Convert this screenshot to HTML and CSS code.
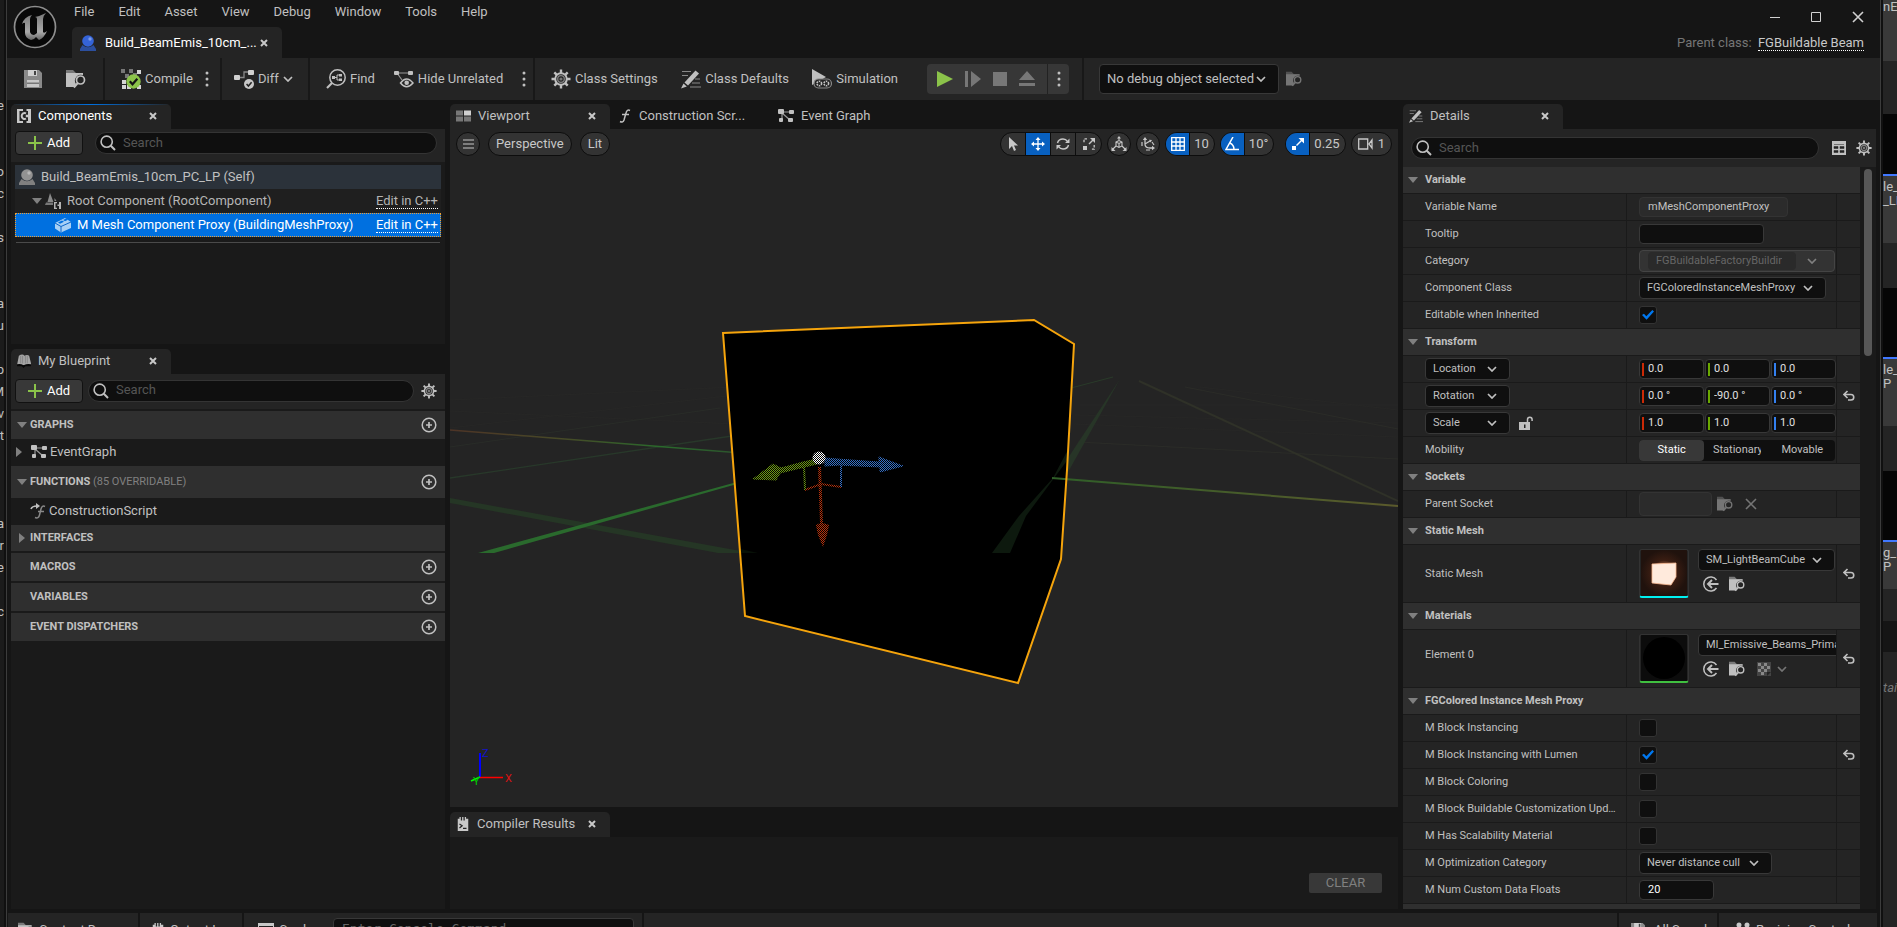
FILE: index.html
```html
<!DOCTYPE html>
<html lang="en">
<head>
<meta charset="utf-8">
<meta name="viewport" content="width=device-width, initial-scale=1">
<title>Build_BeamEmis_10cm_PC_LP</title>
<link rel="stylesheet" href="styles.css">
</head>
<body>
<svg class="sprite" aria-hidden="true">
  <symbol id="i-x" viewBox="0 0 8 8"><path d="M1 1l6 6M7 1L1 7" stroke="currentColor" stroke-width="2" fill="none"/></symbol>
  <symbol id="i-close" viewBox="0 0 12 12"><path d="M1 1l10 10M11 1L1 11" stroke="currentColor" stroke-width="1.6" fill="none"/></symbol>
  <symbol id="i-chev" viewBox="0 0 10 6"><path d="M1 1l4 4 4-4" stroke="currentColor" stroke-width="1.7" fill="none"/></symbol>
  <symbol id="i-dots" viewBox="0 0 4 16"><circle cx="2" cy="2" r="1.5" fill="currentColor"/><circle cx="2" cy="8" r="1.5" fill="currentColor"/><circle cx="2" cy="14" r="1.5" fill="currentColor"/></symbol>
  <symbol id="i-search" viewBox="0 0 16 16"><circle cx="6.7" cy="6.7" r="5.6" stroke="currentColor" stroke-width="1.6" fill="none"/><path d="M10.8 10.8l4.2 4.2" stroke="currentColor" stroke-width="2"/></symbol>
  <symbol id="i-plus" viewBox="0 0 14 14"><path d="M7 0v14M0 7h14" stroke="#8bc34a" stroke-width="2"/></symbol>
  <symbol id="i-addc" viewBox="0 0 16 16"><circle cx="8" cy="8" r="6.8" stroke="currentColor" stroke-width="1.5" fill="none"/><path d="M8 5v6M5 8h6" stroke="currentColor" stroke-width="1.7"/></symbol>
  <symbol id="i-down" viewBox="0 0 10 6"><path d="M0 0h10L5 6z" fill="currentColor"/></symbol>
  <symbol id="i-right" viewBox="0 0 6 10"><path d="M0 0v10l6-5z" fill="currentColor"/></symbol>
  <symbol id="i-gear" viewBox="0 0 20 20"><g stroke="currentColor" fill="none"><path d="M10 .5v19M.5 10h19M3.3 3.3l13.4 13.4M16.7 3.3L3.3 16.700" stroke-width="2.400"/><circle cx="10" cy="10" r="5.800" fill="#242424" stroke-width="2"/><circle cx="10" cy="10" r="3.300" stroke-width="1.300" opacity=".6"/><circle cx="10" cy="10" r="1.600" fill="#777" stroke="none"/></g></symbol>
  <symbol id="i-save" viewBox="0 0 18 18"><path d="M0 0h15l3 3v15H0z" fill="#8a8a8a"/><path d="M4 0h9v6H4z" fill="#d0d0d0"/><path d="M10 1h2v4h-2z" fill="#444"/><path d="M3 10h12v7H3z" fill="#c8c8c8"/><path d="M3 12.500h12v1.500H3z" fill="#777"/></symbol>
  <symbol id="i-browse" viewBox="0 0 20 18"><path d="M0 3V0h7l3 3h7v2H0z" fill="currentColor" opacity=".55"/><path d="M0 3h17v2a6 6 0 0 0-7 9l-1 3H0z" fill="currentColor"/><circle cx="14.500" cy="10" r="4" stroke="currentColor" stroke-width="1.700" fill="#242424"/><path d="M11.800 13l-4 4.500" stroke="currentColor" stroke-width="2"/></symbol>
  <symbol id="i-compile" viewBox="0 0 20 20"><g fill="#777"><path d="M0 0h4v4H0zM8 0h4v4H8zM4 5h4v4H4zM12 4h4v4h-4z"/></g><g fill="#d5d5d5"><path d="M16 1h4v4h-4zM1 11h4v4H1zM1 16h4v4H1zM6 16h4v4H6zM16 16h4v4h-4z"/></g><circle cx="12.500" cy="12.500" r="7.200" fill="#8bc34a"/><path d="M8.800 12.300l2.700 3 4.800-5.500" stroke="#151515" stroke-width="2.200" fill="none"/></symbol>
  <symbol id="i-diff" viewBox="0 0 20 20"><path d="M5 8.500h5V3h5" stroke="#888" stroke-width="1.300" fill="none"/><rect y="6" width="6" height="5" rx="1" fill="#d0d0d0"/><rect x="14" y="1" width="6" height="5" rx="1" fill="#d0d0d0"/><circle cx="15" cy="15" r="5" fill="#c8c8c8"/><path d="M12.600 15l1.800 2 3.200-3.800" stroke="#222" stroke-width="1.500" fill="none"/></symbol>
  <symbol id="i-find" viewBox="0 0 20 20"><circle cx="11.500" cy="8.500" r="7.700" stroke="currentColor" stroke-width="1.500" fill="none"/><path d="M6 14l-5 5" stroke="currentColor" stroke-width="2.200"/><path d="M8 8.500h3M11 6v5M11 6h3M11 11h3" stroke="currentColor" fill="none"/><path d="M6 7h3v3H6zM13 5h3v2.500h-3zM13 9.500h3V12h-3z" fill="currentColor"/></symbol>
  <symbol id="i-hide" viewBox="0 0 20 18"><path d="M3 3h14M3 3l5 7" stroke="#999" stroke-width="1.200"/><rect y="1" width="5" height="4" rx="1" fill="currentColor"/><rect x="14" y="1" width="5" height="4" rx="1" fill="currentColor"/><path d="M6.500 13q6-8 12.500 0q-6.500 7.500-12.500 0z" stroke="currentColor" stroke-width="1.500" fill="#242424"/><circle cx="12.700" cy="12.700" r="2.300" fill="currentColor"/></symbol>
  <symbol id="i-pencil" viewBox="0 0 20 20"><path d="M1 2.500h9M1 6.500h6M11 14h8M9 18h11M14 10h5" stroke="#888" stroke-width="1.200"/><path d="M14.500 1.500l3.500 3-11 12-3.500-3z" fill="currentColor"/><path d="M2.500 14.500l3.300 3L0 19.500z" fill="currentColor"/></symbol>
  <symbol id="i-sim" viewBox="0 0 20 20"><path d="M0 0l14 8L0 16z" fill="currentColor"/><rect x="2" y="10" width="17.500" height="9" rx="4.500" fill="#242424" stroke="#888" stroke-width="1.200"/><circle cx="7.300" cy="14.500" r="2.300" stroke="currentColor" stroke-width="1.600" stroke-dasharray="1.500 .8" fill="none"/><circle cx="14.300" cy="14.500" r="2.300" stroke="currentColor" stroke-width="1.600" stroke-dasharray="1.500 .8" fill="none"/></symbol>
  <symbol id="i-blue" viewBox="0 0 16 16"><circle cx="8" cy="6" r="5.800" fill="var(--ball)"/><circle cx="10" cy="4" r="1.700" fill="#fff" opacity=".35"/><path d="M0 14l2.500-4q5.500 4.500 11 0L16 14v2H0z" fill="var(--base)"/></symbol>
  <symbol id="i-comp" viewBox="0 0 14 14"><path d="M0 0h6v2H2.500v10H6v2H0zM9.500 0H14v14H9.500v-2h1.500V8.200H8.800V5.800H11V2H9.500z" fill="#c8c8c8"/><path d="M9 4.300A3 3 0 1 0 9 9.700" stroke="#c8c8c8" stroke-width="2" fill="none"/></symbol>
  <symbol id="i-root" viewBox="0 0 16 16"><path d="M5 0l3.500 9h-6zM9.500 5l2 3h-2z" fill="#8a8a8a"/><path d="M1 9.500h7V12H0z" fill="#777"/><path d="M9 9h3v1.300h-1.500v4.400H12V16H9zM14 9h2v7h-2v-3h-1.500v-1.500H14z" fill="#b5b5b5"/></symbol>
  <symbol id="i-brick" viewBox="0 0 16 16"><path d="M0 6l10-5 6 4v6L6 15.500l-6-4z" fill="#a8d0f5"/><path d="M0 6l6 3.500L16 5M6 9.500V15" stroke="#0b65c8" fill="none"/><path d="M3 5.500l4-2 2 1.300-4 2zM8 3l3-1.500 2 1.300-3 1.500z" fill="#0070e0"/></symbol>
  <symbol id="i-graph" viewBox="0 0 16 14"><path d="M4 3h9M4 4l8 7M4 4v7" stroke="#999" stroke-width="1.200"/><rect width="6" height="5" rx="1" fill="currentColor"/><rect x="11" y="1" width="5" height="4" rx="1" fill="currentColor"/><rect x="1" y="9" width="4" height="4" rx="1" fill="currentColor"/><rect x="10" y="9" width="5" height="4" rx="1" fill="currentColor"/></symbol>
  <symbol id="i-func" viewBox="0 0 12 14"><path d="M11 1.500Q8 0 7 4L5 11Q4 14 1 12.500M3 5.500h7" stroke="currentColor" stroke-width="1.500" fill="none"/></symbol>
  <symbol id="i-func2" viewBox="0 0 16 16"><path d="M1 6Q2 3 7 3" stroke="currentColor" stroke-width="1.600" fill="none"/><path d="M6 0l4 3-4 3z" fill="currentColor"/><path d="M15 3.500Q12 2 11 6l-1.500 6Q8.500 16 5 14.500M8 8.500h6" stroke="#888" stroke-width="1.500" fill="none"/></symbol>
  <symbol id="i-book" viewBox="0 0 15 15"><path d="M2 2q4-3 6 0 3-2 5 0l2 8v2H0z" fill="#a5a5a5"/><path d="M4 2v8M6 2v8M9 2v8M11 2v8" stroke="#777" stroke-width=".7"/><path d="M0 11q4-1 7 1 4-2 8-1v2H9l-2 2-2-2H0z" fill="#080808"/></symbol>
  <symbol id="i-view" viewBox="0 0 15 11"><path d="M0 0h7v5H0zM0 6h7v5H0zM8 6h7v5H8z" fill="#777"/><path d="M8 0h7v5H8z" fill="#d0d0d0"/></symbol>
  <symbol id="i-log" viewBox="0 0 12 16"><path d="M0 2h2V0h1.500v4H5V0h1.500v4H8V0h1.500v2H12v14H0z" fill="#c8c8c8"/><path d="M2 8l3 2-3 2.500M6 13h4" stroke="#222" stroke-width="1.400" fill="none"/></symbol>
  <symbol id="i-table" viewBox="0 0 14 14"><path d="M0 0h14v14H0z" fill="currentColor"/><path d="M2 3.500h10M2 5.500h4v2H2zM8 5.500h4v2H8zM2 9.500h4v2H2zM8 9.500h4v2H8z" fill="#242424" stroke="#242424" stroke-width=".5"/></symbol>
  <symbol id="i-reset" viewBox="0 0 12 10"><path d="M4.500 0L1 3.500 4.500 7M1 3.500h7a2.700 2.700 0 0 1 0 5.500H5" stroke="currentColor" stroke-width="1.600" fill="none"/></symbol>
  <symbol id="i-use" viewBox="0 0 16 16"><path d="M13.500 4A7 7 0 1 0 13.500 12" stroke="currentColor" stroke-width="1.500" fill="none"/><path d="M15.500 8H5M9 4L5 8l4 4" stroke="currentColor" stroke-width="1.900" fill="none"/></symbol>
  <symbol id="i-lock" viewBox="0 0 14 14"><path d="M0 6h11v8H0z" fill="currentColor"/><path d="M8.500 6V3.500a2.300 2.300 0 0 1 4.600 0V5" stroke="currentColor" stroke-width="1.500" fill="none"/><path d="M5 8.500h1.500V12H5z" fill="#242424"/></symbol>
  <symbol id="i-check" viewBox="0 0 14 14"><path d="M0 0h14v14H0z" fill="#444"/><path d="M1 1h3v3H1zM7 1h3v3H7zM4 4h3v3H4zM10 4h3v3h-3zM1 7h3v3H1zM7 7h3v3H7zM4 10h3v3H4z" fill="#888"/><path d="M10 14v-4h4z" fill="#242424"/></symbol>
  <symbol id="i-cursor" viewBox="0 0 10 14"><path d="M1 0v12l3-3 2 5 2-1-2-4.500h4z" fill="currentColor"/></symbol>
  <symbol id="i-move" viewBox="0 0 14 14"><path d="M7 2v10M2 7h10" stroke="currentColor" stroke-width="1.300"/><path d="M7 0l2.500 3h-5zM7 14l2.500-3h-5zM0 7l3-2.500v5zM14 7l-3-2.500v5z" fill="currentColor"/></symbol>
  <symbol id="i-rotate" viewBox="0 0 14 14"><path d="M1.500 6Q2.500 2 7 2q3 0 4.500 2.500M12.500 8Q11.500 12 7 12q-3 0-4.500-2.500" stroke="currentColor" stroke-width="1.400" fill="none"/><path d="M13.500 1.500V6H9zM.5 12.500V8H5z" fill="currentColor"/></symbol>
  <symbol id="i-scale" viewBox="0 0 12 12"><path d="M6 6l4-4" stroke="currentColor" stroke-width="1.500"/><path d="M7 0h5v5zM0 8h4v4H0z" fill="currentColor"/><path d="M4 .8H1V5M11.200 7v4.200H7.500" stroke="currentColor" stroke-width="1.300" stroke-dasharray="2.500 1.500" fill="none"/></symbol>
  <symbol id="i-world" viewBox="0 0 16 16"><path d="M5 6l3-1.500L11 6v4l-3 1.500L5 10zM5 6l3 1.500L11 6M8 7.500v4M8 4.500V1M5 10l-4 4M11 10l4 4" stroke="currentColor" stroke-width="1.100" fill="none"/><path d="M6 2.500L8 0l2 2.500zM.5 15v-4l4 4zM15.500 15v-4l-4 4z" fill="currentColor"/></symbol>
  <symbol id="i-snap" viewBox="0 0 14 14"><path d="M4 2v5q0 4 5 4h3M4 7l5-3" stroke="currentColor" stroke-width="1.300" fill="none"/><path d="M4 0l2.200 3H1.800zM14 11l-3-2.200v4.400zM11 3L8 2.800l1.500 2.600z" fill="currentColor"/><path d="M1 5v4M5 13h4M11 5l2 3" stroke="currentColor" stroke-width="1.200"/></symbol>
  <symbol id="i-grid" viewBox="0 0 14 14"><path d="M.7.7h12.600v12.600H.7zM5 0v14M9 0v14M0 5h14M0 9h14" stroke="currentColor" stroke-width="1.300" fill="none"/></symbol>
  <symbol id="i-angle" viewBox="0 0 14 14"><path d="M8 0L1 12.500h13M5 6q4 2 4 6.500" stroke="currentColor" stroke-width="1.500" fill="none"/></symbol>
  <symbol id="i-snapsc" viewBox="0 0 12 12"><path d="M4.500 7.500L10 2" stroke="currentColor" stroke-width="1.500"/><path d="M6.500 0H12v5.500zM0 8h4v4H0z" fill="currentColor"/></symbol>
  <symbol id="i-cam" viewBox="0 0 15 12"><path d="M.7 1h9v10h-9zM14 2l-3 4 3 4z" stroke="currentColor" stroke-width="1.300" fill="none"/></symbol>
</svg>

<div class="desktop">
  <aside class="behind-left" aria-hidden="true">
    <span>e</span><span></span><span></span><span>o</span><span>c</span><span></span><span>s</span><span></span><span></span><span>a</span><span>u</span><span></span><span>p</span><span>M</span><span>v</span><span>t</span><span></span><span></span><span></span><span>a</span><span>r</span><span>e</span><span></span><span>c</span>
  </aside>

  <div class="window">
    <header class="titlebar">
      <svg class="logo" viewBox="0 0 44 44" role="img" aria-label="Unreal Engine">
        <defs><linearGradient id="metal" x1="0" y1="0" x2="0" y2="1"><stop offset="0" stop-color="#777"/><stop offset=".7" stop-color="#aaa"/><stop offset="1" stop-color="#666"/></linearGradient></defs>
        <circle cx="22" cy="22" r="20.500" fill="#080808" stroke="#8e8e8e" stroke-width="1.700"/>
        <path d="M9 19Q11 12 19 10Q17 12 17 14V27Q18 30 21 30Q23 29 24 28V14Q24 12 22 12Q27 11 33 8Q30 11 30 14V27Q31 29 34 26Q31 33 26 35L23 32Q21 35 18 35Q12 33 12 28V18Q11 17 9 19z" fill="url(#metal)"/>
      </svg>
      <div class="title-main">
        <nav class="menu"><button>File</button><button>Edit</button><button>Asset</button><button>View</button><button>Debug</button><button>Window</button><button>Tools</button><button>Help</button></nav>
        <div class="doc-tab"><svg class="s16 ball-blue"><use href="#i-blue"/></svg><span>Build_BeamEmis_10cm_...</span><button class="tab-x" aria-label="Close"><svg class="s8"><use href="#i-x"/></svg></button></div>
      </div>
      <div class="title-end">
        <div class="win-buttons">
          <button aria-label="Minimize"><svg viewBox="0 0 10 10" class="s10"><path d="M0 5.500h10" stroke="#d0d0d0"/></svg></button>
          <button aria-label="Maximize"><svg viewBox="0 0 10 10" class="s10"><path d="M.5.5h9v9h-9z" stroke="#d0d0d0" fill="none"/></svg></button>
          <button aria-label="Close window"><svg class="s12"><use href="#i-close"/></svg></button>
        </div>
        <div class="parent-class">Parent class: <a class="dotted" href="#parent">FGBuildable Beam</a></div>
      </div>
    </header>

    <div class="toolbar">
      <div class="tgroup g-file"><button aria-label="Save"><svg class="s18"><use href="#i-save"/></svg></button><button aria-label="Browse"><svg class="s20"><use href="#i-browse"/></svg></button></div>
      <div class="tgroup g-compile"><button><svg class="s20"><use href="#i-compile"/></svg>Compile</button><button aria-label="Compile options"><svg class="dots"><use href="#i-dots"/></svg></button></div>
      <div class="tgroup g-diff"><button><svg class="s20"><use href="#i-diff"/></svg>Diff<svg class="chev"><use href="#i-chev"/></svg></button></div>
      <div class="tgroup g-find"><button><svg class="s20"><use href="#i-find"/></svg>Find</button><button><svg class="s20"><use href="#i-hide"/></svg>Hide Unrelated</button><button aria-label="Hide options"><svg class="dots"><use href="#i-dots"/></svg></button></div>
      <div class="tgroup g-class"><button><svg class="s20"><use href="#i-gear"/></svg>Class Settings</button><button><svg class="s20"><use href="#i-pencil"/></svg>Class Defaults</button><button><svg class="s20"><use href="#i-sim"/></svg>Simulation</button></div>
      <div class="tgroup g-play">
        <div class="play">
          <button aria-label="Play"><svg class="s16" viewBox="0 0 16 16"><path d="M0 0l16 8L0 16z" fill="#8bc34a"/></svg></button>
          <button aria-label="Step"><svg class="s16" viewBox="0 0 16 16"><path d="M0 0h3v16H0zM6 0l10 8L6 16z" fill="#777"/></svg></button>
          <button aria-label="Stop"><svg class="s14" viewBox="0 0 14 14"><path d="M0 0h14v14H0z" fill="#777"/></svg></button>
          <button aria-label="Eject"><svg class="s16" viewBox="0 0 16 16"><path d="M8 0l8 9H0zM0 12h16v3H0z" fill="#777"/></svg></button>
          <button class="more" aria-label="Play options"><svg class="dots"><use href="#i-dots"/></svg></button>
        </div>
      </div>
      <div class="tgroup g-debug"><span class="select debug"><select aria-label="Debug object"><option>No debug object selected</option></select><svg class="chev"><use href="#i-chev"/></svg></span><button class="dim" aria-label="Browse to object"><svg class="s16"><use href="#i-browse"/></svg></button></div>
    </div>

    <main class="workspace">
      <div class="col-left">
        <section class="panel components">
          <div class="tabs"><div class="tab active focused"><svg class="s14"><use href="#i-comp"/></svg><span>Components</span><button class="tab-x" aria-label="Close"><svg class="s8"><use href="#i-x"/></svg></button></div></div>
          <div class="bar wide"><button class="add"><svg class="s14"><use href="#i-plus"/></svg>Add</button><label class="search"><svg class="s16"><use href="#i-search"/></svg><input type="text" placeholder="Search" aria-label="Search components"></label></div>
          <div class="tree">
            <div class="node self"><svg class="s16 ball-grey"><use href="#i-blue"/></svg><span>Build_BeamEmis_10cm_PC_LP (Self)</span></div>
            <div class="node root"><svg class="tri"><use href="#i-down"/></svg><svg class="s16"><use href="#i-root"/></svg><span>Root Component (RootComponent)</span><a class="dotted" href="#root">Edit in C++</a></div>
            <div class="node proxy"><svg class="s16"><use href="#i-brick"/></svg><span>M Mesh Component Proxy (BuildingMeshProxy)</span><a class="dotted" href="#proxy">Edit in C++</a></div>
            <hr>
          </div>
        </section>
        <section class="panel blueprint">
          <div class="tabs"><div class="tab active"><svg class="s14"><use href="#i-book"/></svg><span>My Blueprint</span><button class="tab-x" aria-label="Close"><svg class="s8"><use href="#i-x"/></svg></button></div></div>
          <div class="bar"><button class="add"><svg class="s14"><use href="#i-plus"/></svg>Add</button><label class="search"><svg class="s16"><use href="#i-search"/></svg><input type="text" placeholder="Search" aria-label="Search blueprint"></label><button class="icon" aria-label="Blueprint settings"><svg class="s16"><use href="#i-gear"/></svg></button></div>
          <div class="outline">
            <div class="group"><svg class="tri"><use href="#i-down"/></svg><h3>GRAPHS</h3><button aria-label="Add graph"><svg class="s16"><use href="#i-addc"/></svg></button></div>
            <div class="item"><svg class="tri-r"><use href="#i-right"/></svg><svg class="s16"><use href="#i-graph"/></svg><span>EventGraph</span></div>
            <div class="group tall"><svg class="tri"><use href="#i-down"/></svg><h3>FUNCTIONS <small>(85 OVERRIDABLE)</small></h3><button aria-label="Add function"><svg class="s16"><use href="#i-addc"/></svg></button></div>
            <div class="item leaf"><svg class="s16"><use href="#i-func2"/></svg><span>ConstructionScript</span></div>
            <div class="group short"><svg class="tri-r"><use href="#i-right"/></svg><h3>INTERFACES</h3></div>
            <div class="group gap"><h3>MACROS</h3><button aria-label="Add macro"><svg class="s16"><use href="#i-addc"/></svg></button></div>
            <div class="group gap"><h3>VARIABLES</h3><button aria-label="Add variable"><svg class="s16"><use href="#i-addc"/></svg></button></div>
            <div class="group gap"><h3>EVENT DISPATCHERS</h3><button aria-label="Add dispatcher"><svg class="s16"><use href="#i-addc"/></svg></button></div>
          </div>
        </section>
      </div>

      <div class="col-mid">
        <section class="panel view-panel">
          <div class="tabs">
            <div class="tab active"><svg class="v15"><use href="#i-view"/></svg><span>Viewport</span><button class="tab-x" aria-label="Close"><svg class="s8"><use href="#i-x"/></svg></button></div>
            <div class="tab"><svg class="s14"><use href="#i-func"/></svg><span>Construction Scr...</span></div>
            <div class="tab"><svg class="s16"><use href="#i-graph"/></svg><span>Event Graph</span></div>
          </div>
          <div class="viewport">
            <svg class="scene" viewBox="450 129 948 678" preserveAspectRatio="xMidYMid slice" role="img" aria-label="Beam mesh preview">
              <defs>
                <linearGradient id="lineA" gradientUnits="userSpaceOnUse" x1="450" y1="0" x2="732" y2="0"><stop offset="0" stop-color="#4e3426"/><stop offset=".4" stop-color="#474a27"/><stop offset=".75" stop-color="#2a6a2c"/><stop offset="1" stop-color="#2c552c"/></linearGradient>
                <linearGradient id="lineB" gradientUnits="userSpaceOnUse" x1="1052" y1="0" x2="1398" y2="0"><stop offset="0" stop-color="#2f5f28"/><stop offset="1" stop-color="#5b5a2c"/></linearGradient>
                <pattern id="dither" width="2" height="2" patternUnits="userSpaceOnUse"><path d="M0 0h1v1H0zM1 1h1v1H1z" fill="#000"/></pattern>
                <clipPath id="cube"><path d="M723 333L1034 320L1074 344L1061 559L1018 683L745 616z"/></clipPath>
              </defs>
              <path d="M450 129h948v678H450z" fill="#242424"/>
              <g fill="none">
                <path d="M450 411L735 424M450 428L735 395M450 400L735 387M1074 424L1398 437M1075 415L1398 423M1080 405L1398 405M1200 387L1398 410" stroke="#272726"/>
                <path d="M450 447L720 408" stroke="#292c28"/>
                <path d="M450 478L732 436" stroke="#28382a" stroke-width="1.300"/>
                <path d="M1071 388L1113 377" stroke="#293a29"/>
                <path d="M1078 442L1398 459M1185 387L1398 429" stroke="#2b2c28"/>
                <path d="M1139 381L1398 501" stroke="#2f3128" stroke-width="2"/>
                <path d="M450 430L735 452.500" stroke="url(#lineA)" stroke-width="1.500"/>
              </g>
              <path d="M450 498L735 550L758 553H718L450 503z" fill="#253625"/>
              <path d="M478 553L737 482v2L494 553z" fill="#2a6a2d"/>
              <path d="M1120 379L1067 474L1060 480L1068 458z" fill="#273527"/>
              <path d="M723 333L1034 320L1074 344L1067 470L1061 559L1018 683L745 616z" fill="#000"/>
              <g clip-path="url(#cube)"><path d="M1074 444L1066 462L1026 516L1010 553H992L1019 516L1053 478L1074 438z" fill="#0d190e"/><path d="M723 545L758 553h-35z" fill="#071007"/></g>
              <path d="M1052 478L1398 506" stroke="url(#lineB)" stroke-width="2"/>
              <path d="M723 333L1034 320L1074 344L1067 470L1061 559L1018 683L745 616z" fill="none" stroke="#f5a40c" stroke-width="2"/>
              <g>
                <path d="M825 458l12 1 42 3v-5l24 9-23 6v-5l-41-2-14 1zM841 464v23" fill="#3470c8" stroke="#3470c8" stroke-width="1"/>
                <path d="M817 459l-14 3-22 6-8-4-20 15 23 1 4-7 37-9zM804 466l1 24" fill="#6d9a14" stroke="#6d9a14" stroke-width="1"/>
                <path d="M818 467h3l2 56 6 2-2 10-4 12-5-12-2-10 4-2z" fill="#b8320c"/>
                <path d="M805 490l16-6 20 3" fill="none" stroke="#b8320c" stroke-width="2"/>
                <path d="M804 466l1 24" stroke="#6d9a14" stroke-width="2"/><path d="M841 463v24" stroke="#3470c8" stroke-width="2"/>
                <circle cx="819" cy="458" r="6.500" fill="#fff"/>
                <path d="M748 448h160v102H748z" fill="url(#dither)" shape-rendering="crispEdges"/>
              </g>
              <path d="M480 753v24" stroke="#00f" stroke-width="2"/><path d="M480 777.500h23" stroke="#f00" stroke-width="1.500"/><path d="M480 777l-9 4" stroke="#0f0" stroke-width="1.500"/>
              <text x="482" y="757" fill="#1414c8">Z</text><text x="505" y="782" fill="#d61414">X</text><text x="473" y="785" fill="#0c0">Y</text>
            </svg>
            <div class="view-tools">
              <button class="pill round lead" aria-label="Viewport options"><svg viewBox="0 0 11 10" class="burger"><path d="M0 1h11M0 5h11M0 9h11" stroke="currentColor" stroke-width="1.200"/></svg></button>
              <button class="pill lead">Perspective</button><button class="pill">Lit</button>
              <span class="spacer"></span>
              <span class="pill seg trs"><button aria-label="Select"><svg class="s14"><use href="#i-cursor"/></svg></button><button class="on" aria-label="Move"><svg class="s14"><use href="#i-move"/></svg></button><button aria-label="Rotate"><svg class="s14"><use href="#i-rotate"/></svg></button><button aria-label="Scale"><svg class="s12"><use href="#i-scale"/></svg></button></span>
              <button class="pill round" aria-label="World space"><svg class="s16"><use href="#i-world"/></svg></button>
              <button class="pill round" aria-label="Surface snapping"><svg class="s14"><use href="#i-snap"/></svg></button>
              <span class="pill seg"><button class="on" aria-label="Grid snap"><svg class="s14"><use href="#i-grid"/></svg></button><button class="num">10</button></span>
              <span class="pill seg"><button class="on" aria-label="Angle snap"><svg class="s14"><use href="#i-angle"/></svg></button><button class="num">10°</button></span>
              <span class="pill seg set-off"><button class="on" aria-label="Scale snap"><svg class="s12"><use href="#i-snapsc"/></svg></button><button class="num">0.25</button></span>
              <button class="pill cam"><svg class="v15"><use href="#i-cam"/></svg>1</button>
            </div>
          </div>
        </section>
        <section class="panel results">
          <div class="tabs"><div class="tab active"><svg class="s14"><use href="#i-log"/></svg><span>Compiler Results</span><button class="tab-x" aria-label="Close"><svg class="s8"><use href="#i-x"/></svg></button></div></div>
          <div class="results-body"><button class="clear">CLEAR</button></div>
        </section>
      </div>

      <section class="panel col-right">
        <div class="tabs"><div class="tab active"><svg class="s14"><use href="#i-pencil"/></svg><span>Details</span><button class="tab-x" aria-label="Close"><svg class="s8"><use href="#i-x"/></svg></button></div></div>
        <div class="bar details-bar"><label class="search"><svg class="s16"><use href="#i-search"/></svg><input type="text" placeholder="Search" aria-label="Search details"></label><button class="icon" aria-label="Property matrix"><svg class="s14"><use href="#i-table"/></svg></button><button class="icon" aria-label="Details settings"><svg class="s16"><use href="#i-gear"/></svg></button></div>
        <div class="details">
          <div class="props">
            <h4><svg class="tri"><use href="#i-down"/></svg>Variable</h4>
            <div class="row"><label for="vname">Variable Name</label><div><input id="vname" class="field readonly w-148" type="text" value="mMeshComponentProxy" readonly></div><div></div></div>
            <div class="row"><label for="tip">Tooltip</label><div><input id="tip" class="field w-124" type="text"></div><div></div></div>
            <div class="row"><label for="cat">Category</label><div><span class="combo"><input id="cat" type="text" value="FGBuildableFactoryBuilding" disabled><svg class="chev"><use href="#i-chev"/></svg></span></div><div></div></div>
            <div class="row"><label for="cls">Component Class</label><div><span class="select w-186"><select id="cls"><option>FGColoredInstanceMeshProxy</option></select><svg class="chev"><use href="#i-chev"/></svg></span></div><div></div></div>
            <div class="row"><label for="edit">Editable when Inherited</label><div><input id="edit" type="checkbox" checked></div><div></div></div>
            <h4><svg class="tri"><use href="#i-down"/></svg>Transform</h4>
            <div class="row"><div><span class="select w-85"><select aria-label="Location mode"><option>Location</option></select><svg class="chev"><use href="#i-chev"/></svg></span></div><div class="vec"><input class="x" aria-label="Location X" value="0.0"><input class="y" aria-label="Location Y" value="0.0"><input class="z" aria-label="Location Z" value="0.0"></div><div></div></div>
            <div class="row"><div><span class="select w-85"><select aria-label="Rotation mode"><option>Rotation</option></select><svg class="chev"><use href="#i-chev"/></svg></span></div><div class="vec"><input class="x" aria-label="Rotation X" value="0.0 °"><input class="y" aria-label="Rotation Y" value="-90.0 °"><input class="z" aria-label="Rotation Z" value="0.0 °"></div><div><button class="reset" aria-label="Reset rotation"><svg class="s12"><use href="#i-reset"/></svg></button></div></div>
            <div class="row"><div><span class="select w-85"><select aria-label="Scale mode"><option>Scale</option></select><svg class="chev"><use href="#i-chev"/></svg></span><button class="lock" aria-label="Lock scale"><svg class="s14"><use href="#i-lock"/></svg></button></div><div class="vec"><input class="x" aria-label="Scale X" value="1.0"><input class="y" aria-label="Scale Y" value="1.0"><input class="z" aria-label="Scale Z" value="1.0"></div><div></div></div>
            <div class="row"><span>Mobility</span><div><span class="mobility"><label><input type="radio" name="mob" checked><span>Static</span></label><label><input type="radio" name="mob"><span>Stationary</span></label><label><input type="radio" name="mob"><span>Movable</span></label></span></div><div></div></div>
            <h4><svg class="tri"><use href="#i-down"/></svg>Sockets</h4>
            <div class="row"><label for="sock">Parent Socket</label><div><input id="sock" class="field readonly w-73" type="text" readonly><button class="dim sock-a" aria-label="Browse sockets"><svg class="s16"><use href="#i-browse"/></svg></button><button class="dim sock-b" aria-label="Clear socket"><svg class="s12"><use href="#i-close"/></svg></button></div><div></div></div>
            <h4><svg class="tri"><use href="#i-down"/></svg>Static Mesh</h4>
            <div class="row asset"><label for="mesh">Static Mesh</label><div><svg class="thumb mesh" viewBox="0 0 46 46"><defs><radialGradient id="glow"><stop offset=".3" stop-color="#a86a48"/><stop offset=".55" stop-color="#3a1d12"/><stop offset="1" stop-color="#20120d"/></radialGradient></defs><path d="M0 0h46v46H0z" fill="url(#glow)"/><path d="M11 14l24-1v14l-5 8-19-2z" fill="#ffeadc" stroke="#f8b890" stroke-width=".8"/></svg><div class="asset-side"><span class="select w-136"><select id="mesh"><option>SM_LightBeamCube</option></select><svg class="chev"><use href="#i-chev"/></svg></span><span class="asset-tools"><button aria-label="Use selected"><svg class="s16"><use href="#i-use"/></svg></button><button aria-label="Browse to mesh"><svg class="s16"><use href="#i-browse"/></svg></button></span></div></div><div><button class="reset" aria-label="Reset mesh"><svg class="s12"><use href="#i-reset"/></svg></button></div></div>
            <h4><svg class="tri"><use href="#i-down"/></svg>Materials</h4>
            <div class="row asset element"><label for="mat">Element 0</label><div><svg class="thumb mat" viewBox="0 0 46 46"><path d="M0 0h46v46H0z" fill="#0c0c0c"/><circle cx="23" cy="23" r="21" fill="#000"/></svg><div class="asset-side"><span class="select w-186"><select id="mat"><option>MI_Emissive_Beams_Primary</option></select></span><span class="asset-tools"><button aria-label="Use selected"><svg class="s16"><use href="#i-use"/></svg></button><button aria-label="Browse to material"><svg class="s16"><use href="#i-browse"/></svg></button><button class="dim" aria-label="Textures"><svg class="s14"><use href="#i-check"/></svg><svg class="chev"><use href="#i-chev"/></svg></button></span></div></div><div><button class="reset" aria-label="Reset material"><svg class="s12"><use href="#i-reset"/></svg></button></div></div>
            <h4><svg class="tri"><use href="#i-down"/></svg>FGColored Instance Mesh Proxy</h4>
            <div class="row"><label for="b1">M Block Instancing</label><div><input id="b1" type="checkbox"></div><div></div></div>
            <div class="row"><label for="b2">M Block Instancing with Lumen</label><div><input id="b2" type="checkbox" checked></div><div><button class="reset" aria-label="Reset lumen"><svg class="s12"><use href="#i-reset"/></svg></button></div></div>
            <div class="row"><label for="b3">M Block Coloring</label><div><input id="b3" type="checkbox"></div><div></div></div>
            <div class="row"><label for="b4">M Block Buildable Customization Updates</label><div><input id="b4" type="checkbox"></div><div></div></div>
            <div class="row"><label for="b5">M Has Scalability Material</label><div><input id="b5" type="checkbox"></div><div></div></div>
            <div class="row"><label for="opt">M Optimization Category</label><div><span class="select w-132"><select id="opt"><option>Never distance cull</option></select><svg class="chev"><use href="#i-chev"/></svg></span></div><div></div></div>
            <div class="row"><label for="num">M Num Custom Data Floats</label><div><input id="num" class="field bright w-74" type="text" value="20"></div><div></div></div>
            <h4></h4>
          </div>
          <div class="scroll"><span></span></div>
        </div>
      </section>
    </main>

    <footer class="status">
      <button class="st st-a"><svg class="s16"><use href="#i-browse"/></svg>Content Drawer</button>
      <button class="st st-b"><svg class="s14"><use href="#i-log"/></svg>Output Log</button>
      <div class="st st-c"><button><svg class="s16" viewBox="0 0 16 16"><path d="M0 1h16v14H0z" fill="#c8c8c8"/><path d="M1 4h14v10H1z" fill="#222"/></svg>Cmd<svg class="chev"><use href="#i-chev"/></svg></button><input type="text" placeholder="Enter Console Command" aria-label="Console command"></div>
      <div class="st st-d"></div>
      <button class="st st-e"><svg class="s14"><use href="#i-save"/></svg>All Saved</button>
      <button class="st st-f"><svg class="s16" viewBox="0 0 16 16"><circle cx="4" cy="3" r="2.500" fill="#c8c8c8"/><circle cx="12" cy="3" r="2.500" fill="#c8c8c8"/><path d="M4 5v9M12 5q0 5-8 5" stroke="#c8c8c8" fill="none"/></svg>Revision Control<svg class="chev"><use href="#i-chev"/></svg></button>
    </footer>
  </div>

  <aside class="behind-right" aria-hidden="true">
    <div class="tile first">nEmi</div>
    <div class="tile">le_Be<br>_LP</div>
    <div class="tile">le_Be<br>P</div>
    <div class="tile last">g_Be<br>P</div>
    <div class="tail"><i>tails</i></div>
  </aside>
</div>
</body>
</html>
```

FILE: styles.css
```css
* { box-sizing: border-box; }
body { margin: 0; background: #151515; color: #c0c0c0; font: 13px/16px Roboto, "Liberation Sans", sans-serif; overflow: hidden; }
button, input, select { font: inherit; color: inherit; margin: 0; }
button { background: none; border: 0; padding: 0; display: inline-flex; align-items: center; white-space: nowrap; }
svg { display: block; flex: none; }
h3, h4 { margin: 0; font: inherit; }
.sprite { position: absolute; width: 0; height: 0; }
.s8 { width: 8px; height: 8px; } .s10 { width: 10px; height: 10px; } .s12 { width: 12px; height: 12px; }
.s14 { width: 14px; height: 14px; } .s16 { width: 16px; height: 16px; } .s18 { width: 18px; height: 18px; } .s20 { width: 20px; height: 20px; }
.v15 { width: 15px; height: 12px; }
.chev { width: 10px; height: 6px; }
.dots { width: 4px; height: 16px; }
.tri { width: 10px; height: 6px; color: #808080; }
.tri-r { width: 6px; height: 10px; color: #808080; }
.ball-blue { --ball: #3564d8; --base: #2c4f9e; }
.ball-grey { --ball: #929292; --base: #808080; }
.dotted { color: inherit; text-decoration: none; border-bottom: 1px dotted #fff; line-height: 15px; }

.desktop { display: grid; grid-template-columns: 7px 1fr 17px; height: 100vh; overflow: hidden; }

/* neighbouring windows that show at both edges */
.behind-left { border-right: 1px solid #3c3c3c; box-shadow: inset -2px 0 #101010; background: #1b1b1b; padding-top: 95px; overflow: hidden; display: flex; flex-direction: column; }
.behind-left span { height: 22px; flex: none; width: 4px; display: flex; justify-content: flex-end; line-height: 22px; overflow: hidden; }
.behind-right { border-left: 1px solid #3c3c3c; background: #242424; box-shadow: inset 2px 0 #101010; padding-left: 2px; overflow: hidden; }
.tile { height: 69px; margin-bottom: 114px; background: #393939; border-top: 2px solid #4078ff; line-height: 14px; padding-top: 4px; white-space: nowrap; box-shadow: 0 11px #242424, 0 114px #060606; }
.tile.first { height: 61px; border: 0; margin-bottom: 113px; padding: 0; }
.tile.last { height: 49px; margin: 0; box-shadow: none; }
.tail { margin-top: 32px; border-top: 31px solid #151515; padding-top: 28px; color: #777; }

.window { display: flex; flex-direction: column; min-width: 0; height: calc(100vh + 22px); background: #151515; }
.titlebar { display: flex; height: 58px; flex: none; }
.logo { width: 44px; height: 44px; margin: 5px 0 0 6px; }
.title-main { flex: 1; display: flex; flex-direction: column; justify-content: space-between; padding-left: 5px; }
.menu { display: flex; padding: 4px 0 0; }
.menu button { padding: 0 12px; margin: 0; }
.doc-tab { display: flex; align-items: center; width: 210px; height: 31px; margin-left: 10px; padding: 0 14px 0 8px; background: #242424; border-radius: 5px 5px 0 0; color: #fff; }
.doc-tab span { margin-left: 9px; flex: 1; white-space: nowrap; }
.tab-x { color: #c8c8c8; }
.title-end { display: flex; flex-direction: column; align-items: flex-end; padding: 11px 16px 0 0; }
.win-buttons { display: flex; gap: 31px; height: 12px; color: #d0d0d0; }
.parent-class { margin-top: 12px; color: #757575; }
.parent-class a { color: #c8c8c8; margin-left: 3px; }

.toolbar { display: flex; height: 42px; flex: none; background: #242424; }
.tgroup { display: flex; align-items: center; border-right: 2px solid #181818; flex: none; }
.tgroup button { gap: 4px; }
.g-file { padding: 0 17px; gap: 24px; width: 98px; }
.g-compile { padding: 0 11px 0 16px; width: 117px; justify-content: space-between; }
.g-diff { padding-left: 12px; width: 88px; }
.g-find { padding: 0 11px 0 16px; width: 225px; gap: 19px; }
.g-find button:last-child { margin-left: auto; }
.g-class { padding: 0 12px 0 16px; width: 375px; justify-content: space-between; border: 0; }
.g-play { padding: 0 13px 0 0; width: 174px; }
.g-play::before { content: ""; width: 2px; height: 30px; background: #181818; margin-right: 17px; }
.play { display: flex; height: 30px; background: #373737; border-radius: 4px; padding-left: 10px; gap: 12px; align-items: center; flex: 1; }
.play .more { border-left: 1px solid #222; align-self: stretch; margin-left: auto; width: 22px; justify-content: center; }
.g-debug { padding-left: 15px; border: 0; gap: 7px; }
.dim { color: #757575; }

.select { display: inline-grid; grid-template-columns: minmax(0, 1fr) auto; grid-template-rows: 100%; align-items: center; background: #0f0f0f; border: 1px solid #383838; border-radius: 4px; height: 22px; flex: none; }
.select select { grid-area: 1 / 1 / 2 / 3; appearance: none; background: none; border: 0; padding: 0 0 0 7px; width: 100%; height: 100%; text-overflow: clip; }
.select .chev { grid-area: 1 / 2; margin-right: 12px; pointer-events: none; }
.debug { width: 180px; height: 30px; }

.workspace { flex: 1; min-height: 0; display: grid; grid-template-columns: 434px minmax(0, 1fr) 473px; gap: 5px; padding: 4px; }
.panel { display: flex; flex-direction: column; min-height: 0; min-width: 0; }
.tabs { display: flex; height: 25px; flex: none; }
.tab { display: flex; align-items: center; width: 160px; padding: 0 14px 2px 6px; border-radius: 5px 5px 0 0; white-space: nowrap; }
.tab span { flex: 1; margin-left: 7px; }
.tab.active { background: #242424; }
.tab:not(.active) { padding-left: 8px; }
.tab.focused { color: #fff; background: linear-gradient(90deg, #242424, #0070e0 50%, #242424) top / 100% 1px no-repeat, #242424; }
.bar { display: flex; align-items: center; background: #242424; height: 35px; flex: none; padding: 0 8px 2px 4px; gap: 5px; }
.bar.wide { gap: 12px; height: 33px; padding-bottom: 5px; }
.add { height: 24px; width: 68px; background: #383838; border: 1px solid #111; border-radius: 4px; justify-content: center; gap: 5px; color: #fff; }
.search { flex: 1; display: flex; align-items: center; height: 22px; border: 1px solid #343434; border-radius: 11px; background: #0f0f0f; padding-left: 4px; min-width: 0; }
.search input { flex: 1; min-width: 0; background: none; border: 0; padding: 0 8px 2px 7px; height: 18px; outline: 0; }
.search input::placeholder { color: #555; opacity: 1; }
.icon { margin-left: 2px; }

.col-left { display: flex; flex-direction: column; gap: 5px; min-height: 0; }
.components { height: 240px; flex: none; }
.blueprint { flex: 1; }
.tree { flex: 1; background: #1a1a1a; padding: 3px 4px 0; }
.node { height: 24px; display: flex; align-items: center; padding: 0 3px 0 4px; gap: 6px; white-space: nowrap; }
.node span { flex: 1; }
.node.self { background: #2b323a; }
.node.root { background: #1f1f1f; padding-left: 17px; gap: 3px; color: #b5b5b5; }
.node.root span { margin-left: 3px; }
.node.proxy { background: #0070e0; padding-left: 40px; outline: 1px dotted #f0a030; outline-offset: -1px; color: #fff; }
.tree hr { border: 0; border-top: 1px solid #4a4a4a; margin: 5px 1px 0; }
.outline { flex: 1; background: #1a1a1a; padding-top: 2px; }
.group { display: flex; align-items: center; height: 28px; background: #2f2f2f; padding: 0 8px 0 6px; }
.group h3 { flex: 1; margin-left: 3px; font-weight: 700; font-size: 11px; }
.group h3 small { font-size: 11px; font-weight: 400; color: #808080; }
.group.tall { height: 32px; }
.group.short { height: 26px; padding-left: 8px; }
.group.short h3 { margin-left: 5px; }
.group.gap { margin-top: 2px; padding-left: 16px; }
.item { height: 27px; display: flex; align-items: center; padding: 0 0 2px 5px; }
.item svg + svg { margin-left: 9px; }
.item.leaf { padding-left: 19px; }
.item span { margin-left: 3px; }

.col-mid { display: flex; flex-direction: column; gap: 5px; min-height: 0; }
.view-panel { flex: 1; }
.viewport { flex: 1; position: relative; min-height: 0; overflow: hidden; background: #242424; }
.scene { position: absolute; inset: 0; width: 100%; height: 100%; font: 11px Roboto, sans-serif; }
.view-tools { position: relative; display: flex; align-items: center; gap: 5px; padding: 3px 6px; }
.spacer { flex: 1; }
.pill { height: 24px; border: 1px solid #0d0d0d; border-radius: 12px; background: #333; padding: 0 7px; color: #c8c8c8; overflow: hidden; flex: none; }
.pill.round { width: 24px; padding: 0; justify-content: center; }
.pill.lead { margin-right: 3px; }
.burger { width: 11px; height: 10px; }
.pill.seg { display: inline-flex; padding: 0; }
.seg button { width: 24px; justify-content: center; border-right: 1px solid #0d0d0d; }
.trs button { width: 25px; }
.seg button:last-child { border: 0; }
.seg .on { background: #0860c0; color: #fff; }
.seg .num { width: auto; padding: 0 5px 0 4px; }
.set-off { margin-left: 6px; }
.cam { gap: 5px; padding: 0 6px; }
.results { height: 97px; flex: none; }
.results-body { flex: 1; background: #1a1a1a; display: flex; justify-content: flex-end; align-items: flex-end; padding: 16px; }
.clear { width: 73px; height: 20px; background: #383838; color: #808080; justify-content: center; border-radius: 2px; }

.details-bar { height: 38px; gap: 10px; padding: 0 4px 0 8px; }
.details-bar .icon { margin-left: 0; }
.details-bar .icon:first-of-type { margin-left: 3px; }
.details { flex: 1; min-height: 0; display: flex; background: #1a1a1a; font-size: 11px; overflow: hidden; }
.props { flex: 1; min-width: 0; }
.props h4 { height: 27px; background: #2f2f2f; border-bottom: 1px solid #1a1a1a; display: flex; align-items: center; gap: 7px; padding-left: 5px; font-weight: 700; }
.row { display: grid; grid-template-columns: 224px 1fr 23px; height: 27px; border-bottom: 1px solid #1a1a1a; background: #242424; }
.row > * { display: flex; align-items: center; min-width: 0; overflow: hidden; }
.row > :first-child { padding-left: 22px; border-right: 1px solid #1a1a1a; }
.row > label:first-child { display: block; line-height: 26px; white-space: nowrap; text-overflow: ellipsis; padding-right: 5px; }
.row > :nth-child(2) { padding-left: 12px; border-right: 1px solid #1a1a1a; }
.row > :last-child { justify-content: center; }
.row.asset { height: 58px; }
.row.asset > label:first-child { line-height: 57px; }
.row.element > label:first-child { line-height: 50px; }
.field { height: 20px; border: 1px solid #383838; border-radius: 4px; background: #0f0f0f; padding: 0 8px 1px; }
.field.readonly { background: #2b2b2b; border-color: #333; }
.bright { color: #fff; }
.w-148 { width: 149px; } .w-124 { width: 125px; } .w-73 { width: 73px; height: 24px; } .w-74 { width: 75px; }
.field.w-73 { height: 24px; }
.w-186 { width: 187px; } .w-85 { width: 85px; } .w-136 { width: 137px; } .w-132 { width: 133px; }
.combo { display: flex; align-items: center; justify-content: space-between; width: 196px; height: 22px; background: #333; border: 1px solid #444; border-radius: 4px; padding: 0 17px 0 8px; color: #808080; }
.combo input { width: 148px; height: 18px; border: 0; border-radius: 4px; background: #2a2a2a; color: #666; padding: 0 14px 2px 8px; }
input[type=checkbox] { appearance: none; width: 18px; height: 18px; border: 1px solid #333; border-radius: 3px; background: #0f0f0f; display: grid; place-items: center; }
input[type=checkbox]:checked::before { content: ""; width: 12px; height: 10px; background: #0078f0; clip-path: polygon(0 50%, 16% 38%, 36% 62%, 86% 0, 100% 14%, 38% 98%); }
.vec { gap: 1px; }
.vec input { width: 65px; height: 20px; border: 1px solid #383838; border-radius: 4px; color: #e0e0e0; padding: 0 0 1px 8px; }
.vec .x { background: linear-gradient(#cc2a06, #cc2a06) 2px center / 2px 13px no-repeat, #0f0f0f; }
.vec .y { background: linear-gradient(#6aa800, #6aa800) 2px center / 2px 13px no-repeat, #0f0f0f; }
.vec .z { background: linear-gradient(#3380f0, #3380f0) 2px center / 2px 13px no-repeat, #0f0f0f; }
.lock { margin-left: 9px; }
.mobility { display: flex; width: 196px; height: 21px; background: #0f0f0f; border-radius: 4px; }
.mobility label { flex: 1; display: flex; justify-content: center; align-items: center; border-radius: 4px; min-width: 0; }
.mobility label:has(:checked) { background: #383838; color: #fff; }
.mobility span { width: 48px; overflow: hidden; text-align: center; white-space: nowrap; }
.mobility label:nth-child(2) span { text-align: left; }
.mobility input { appearance: none; width: 0; height: 0; margin: 0; }
.sock-a { margin-left: 5px; } .sock-b { margin-left: 12px; }
.row.asset > :nth-child(2) { padding-bottom: 1px; }
.thumb { width: 50px; height: 49px; border: 1px solid #333; border-radius: 3px; }
.thumb.mesh { border-bottom: 2px solid #00f0f0; } .thumb.mat { border-bottom: 2px solid #40c040; }
.asset-side { margin-left: 9px; display: flex; flex-direction: column; gap: 5px; padding-bottom: 5px; }
.asset-tools { display: flex; gap: 10px; padding-left: 5px; }
.asset-tools .dim { gap: 6px; margin-left: 2px; }
.scroll { width: 16px; padding: 2px 4px; }
.scroll span { display: block; height: 187px; border-radius: 4px; background: #575757; }

.status { display: flex; gap: 2px; height: 36px; flex: none; padding: 0 3px 0 1px; }
.st { background: #242424; display: flex; align-items: center; gap: 5px; padding: 0 10px 3px; }
.st-a { width: 130px; } .st-b { width: 102px; padding-left: 11px; } .st-c { width: 398px; padding: 0 8px 0 14px; justify-content: space-between; }
.st-c button { gap: 5px; padding-bottom: 3px; }
.st-c input { width: 301px; height: 26px; background: #0f0f0f; border: 1px solid #383838; border-radius: 4px; padding: 0 8px 5px; font: 13px "DejaVu Sans Mono", monospace; }
.st-c input::placeholder { color: #666; opacity: 1; }
.st-d { flex: 1; }
.st-e { width: 98px; padding-left: 12px; gap: 9px; } .st-f { width: 158px; padding-left: 16px; }
```
